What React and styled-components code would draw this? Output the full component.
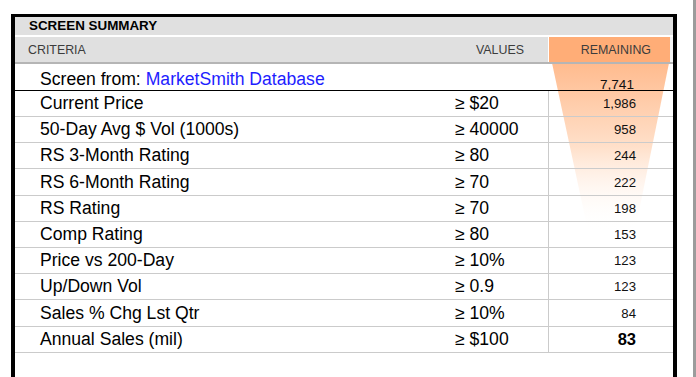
import React from "react";
import styled, { createGlobalStyle, css } from "styled-components";

const GlobalStyle = createGlobalStyle`
    html, body {
        margin: 0;
        padding: 0;
        background: #ffffff;
    }
    body {
        font-family: "Liberation Sans", Arial, sans-serif;
        color: #000000;
    }
`
const Page = styled.div`
    display: flex;
    width: 696px;
    height: 377px;
    overflow: hidden;
`
const Panel = styled.div`
    position: relative;
    flex: none;
    width: 658px;
    margin: 14px 0 0 11px;
    border: solid #000000;
    border-width: 3px 4px 0 4px;
    min-height: 400px;
`
const ScrollEdge = styled.div`
    flex: none;
    width: 3px;
    margin-left: auto;
    background: #9c9c9c;
`
const TitleBar = styled.div`
    height: 18px;
    line-height: 18px;
    padding-left: 14px;
    background: #e0e0e0;
    border-bottom: 2px solid #ffffff;
    font-size: 13.4px;
    font-weight: bold;
`
const Grid = styled.div`
    position: relative;
    z-index: 1;
    display: grid;
    grid-template-columns: 425px 108px 125px;
`
const HeadRow = styled(Grid)`
    height: 25px;
    background: #e0e0e0;
    border-bottom: 2px solid #b5b5b5;
    font-size: 12.4px;
    color: #3c3c3c;
`
const HeadCell = styled.div`
    display: flex;
    align-items: center;
    justify-content: ${({ right }) => (right ? "flex-end" : "flex-start")};
    padding: ${({ right }) => (right ? "0 24px 0 0" : "0 0 0 13px")};
    ${({ accent }) => accent && css`
        justify-content: flex-end;
        padding: 0 19px 0 0;
        background: #ffad77;
        border-left: 1px solid #ffffff;
        border-right: 3px solid #f4f4f4;
    `}
`
const Row = styled(Grid)`
    height: ${({ tall }) => (tall ? "26px" : "25px")};
    border-bottom: 1px solid ${({ strong }) => (strong ? "#000000" : "#cbcbcb")};
`
const Label = styled.div`
    display: flex;
    align-items: center;
    padding-left: 25px;
    font-size: 17.6px;
    ${({ low }) => low && css`
        padding-top: 5px;
    `}
`
const Link = styled.span`
    color: #1e1eff;
    margin-left: 5px;
`
const Value = styled.div`
    display: flex;
    align-items: center;
    padding-left: 15px;
    font-size: 17.6px;
`
const Count = styled.div`
    display: flex;
    align-items: center;
    justify-content: flex-end;
    padding-right: 37px;
    border-left: 1px solid #cbcbcb;
    font-size: 13.2px;
    color: #111111;
    ${({ bold }) => bold && css`
        font-size: 16.5px;
        font-weight: bold;
        color: #000000;
    `}
    ${({ top }) => top && css`
        align-items: flex-end;
        padding-right: 39px;
        border-left: none;
        font-size: 13.6px;
        line-height: 11px;
    `}
`
const Funnel = styled.svg`
    position: absolute;
    left: 534px;
    top: 46px;
    z-index: 0;
    pointer-events: none;
`

const criteria = [
    { label: "Current Price", value: "≥ $20", count: "1,986" },
    { label: "50-Day Avg $ Vol (1000s)", value: "≥ 40000", count: "958" },
    { label: "RS 3-Month Rating", value: "≥ 80", count: "244" },
    { label: "RS 6-Month Rating", value: "≥ 70", count: "222", tall: true },
    { label: "RS Rating", value: "≥ 70", count: "198" },
    { label: "Comp Rating", value: "≥ 80", count: "153" },
    { label: "Price vs 200-Day", value: "≥ 10%", count: "123" },
    { label: "Up/Down Vol", value: "≥ 0.9", count: "123" },
    { label: "Sales % Chg Lst Qtr", value: "≥ 10%", count: "84", tall: true },
    { label: "Annual Sales (mil)", value: "≥ $100", count: "83", bold: true },
];

const App = () => {
    return (
        <Page>
            <GlobalStyle />
            <Panel>
                <TitleBar>SCREEN SUMMARY</TitleBar>
                <HeadRow>
                    <HeadCell>CRITERIA</HeadCell>
                    <HeadCell right>VALUES</HeadCell>
                    <HeadCell accent>REMAINING</HeadCell>
                </HeadRow>
                <Funnel width="121" height="172" viewBox="0 0 121 172">
                    <defs>
                        <linearGradient id="fade" x1="0" y1="0" x2="0" y2="1">
                            <stop offset="0" stopColor="#ffbb8e" />
                            <stop offset="0.5" stopColor="#ffe0ca" />
                            <stop offset="1" stopColor="#ffffff" stopOpacity="0" />
                        </linearGradient>
                    </defs>
                    <polygon points="3,0 120,0 86,168 39,168" fill="url(#fade)" />
                </Funnel>
                <Row strong tall>
                    <Label low>
                        Screen from:<Link>MarketSmith Database</Link>
                    </Label>
                    <div />
                    <Count top>7,741</Count>
                </Row>
                {criteria.map((item) => (
                    <Row key={item.label} tall={item.tall}>
                        <Label>{item.label}</Label>
                        <Value>{item.value}</Value>
                        <Count bold={item.bold}>{item.count}</Count>
                    </Row>
                ))}
            </Panel>
            <ScrollEdge />
        </Page>
    );
}
export default App;
